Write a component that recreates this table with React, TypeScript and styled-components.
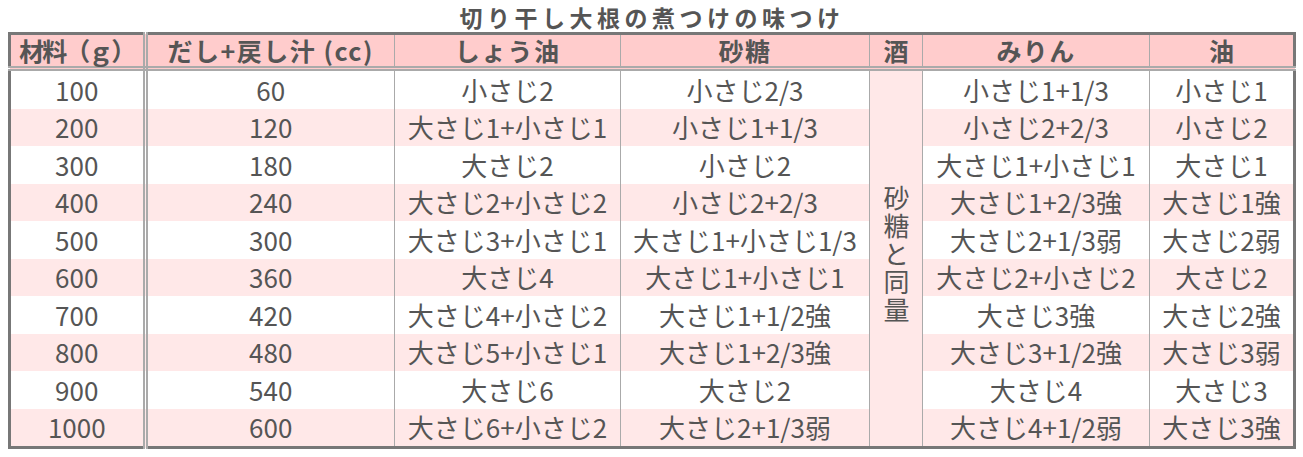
import React from 'react';
import styled, { createGlobalStyle } from 'styled-components';

const GlobalStyle = createGlobalStyle`
  html, body { margin: 0; padding: 0; background: #ffffff; }
  body { font-family: "Noto Sans CJK JP", "Noto Sans", sans-serif; color: #555555; }
`;

const Page = styled.div`
  padding: 0 8px;
`;

const Title = styled.h1`
  margin: 0;
  height: 32px;
  line-height: normal;
  text-align: center;
  font-size: 23px;
  font-weight: 700;
  letter-spacing: 4.5px;
  color: #555555;
  width: 1288px;
`;

const Table = styled.table`
  width: 1288px;
  table-layout: fixed;
  border-collapse: collapse;
  border: 3px solid #777777;
  font-size: 26px;
  color: #555555;
`;

const HeadCell = styled.th<{ $double?: boolean; $spacing: number }>`
  background: #ffcccc;
  font-size: 25px;
  font-weight: 700;
  height: 31px;
  padding: 0;
  line-height: 1;
  white-space: nowrap;
  text-align: center;
  vertical-align: middle;
  letter-spacing: ${(p) => p.$spacing}px;
  border: 1px solid #aaaaaa;
  border-bottom: 5px double #aaaaaa;
  ${(p) => (p.$double ? 'border-right: 5px double #aaaaaa;' : '')}
`;

const Cell = styled.td<{ $double?: boolean; $stripe?: boolean }>`
  background: ${(p) => (p.$stripe ? '#ffe8e8' : '#ffffff')};
  height: 37.5px;
  padding: 0;
  line-height: 1;
  white-space: nowrap;
  text-align: center;
  vertical-align: middle;
  border: 1px solid #aaaaaa;
  border-top: none;
  border-bottom: none;
  ${(p) => (p.$double ? 'border-right: 5px double #aaaaaa;' : '')}
`;

const SakeCell = styled.td`
  background: #ffe8e8;
  padding: 0;
  text-align: center;
  vertical-align: middle;
  border: 1px solid #aaaaaa;
`;

const VerticalText = styled.span`
  display: inline-block;
  writing-mode: vertical-rl;
  text-orientation: upright;
  letter-spacing: 2px;
  line-height: 1;
  font-size: 26px;
`;

const widths = [135.5, 249.5, 226, 249, 53, 227, 145];
const heads: { label: string; spacing: number }[] = [
  { label: '材料（ｇ）', spacing: -2 },
  { label: 'だし+戻し汁 (cc)', spacing: 1.5 },
  { label: 'しょう油', spacing: 1.4 },
  { label: '砂糖', spacing: 1.4 },
  { label: '酒', spacing: 0 },
  { label: 'みりん', spacing: 1.4 },
  { label: '油', spacing: 0 },
];

const rows: string[][] = [
  ['100', '60', '小さじ2', '小さじ2/3', '小さじ1+1/3', '小さじ1'],
  ['200', '120', '大さじ1+小さじ1', '小さじ1+1/3', '小さじ2+2/3', '小さじ2'],
  ['300', '180', '大さじ2', '小さじ2', '大さじ1+小さじ1', '大さじ1'],
  ['400', '240', '大さじ2+小さじ2', '小さじ2+2/3', '大さじ1+2/3強', '大さじ1強'],
  ['500', '300', '大さじ3+小さじ1', '大さじ1+小さじ1/3', '大さじ2+1/3弱', '大さじ2弱'],
  ['600', '360', '大さじ4', '大さじ1+小さじ1', '大さじ2+小さじ2', '大さじ2'],
  ['700', '420', '大さじ4+小さじ2', '大さじ1+1/2強', '大さじ3強', '大さじ2強'],
  ['800', '480', '大さじ5+小さじ1', '大さじ1+2/3強', '大さじ3+1/2強', '大さじ3弱'],
  ['900', '540', '大さじ6', '大さじ2', '大さじ4', '大さじ3'],
  ['1000', '600', '大さじ6+小さじ2', '大さじ2+1/3弱', '大さじ4+1/2弱', '大さじ3強'],
];

export default function App() {
  return (
    <Page>
      <GlobalStyle />
      <Title>切り干し大根の煮つけの味つけ</Title>
      <Table>
        <colgroup>
          {widths.map((w, i) => (
            <col key={i} style={{ width: `${w}px` }} />
          ))}
        </colgroup>
        <thead>
          <tr>
            {heads.map((h, i) => (
              <HeadCell key={h.label} $double={i === 0} $spacing={h.spacing}>
                {h.label}
              </HeadCell>
            ))}
          </tr>
        </thead>
        <tbody>
          {rows.map((r, ri) => {
            const stripe = ri % 2 === 1;
            return (
              <tr key={r[0]}>
                <Cell $double $stripe={stripe}>{r[0]}</Cell>
                <Cell $stripe={stripe}>{r[1]}</Cell>
                <Cell $stripe={stripe}>{r[2]}</Cell>
                <Cell $stripe={stripe}>{r[3]}</Cell>
                {ri === 0 && (
                  <SakeCell rowSpan={10}>
                    <VerticalText>砂糖と同量</VerticalText>
                  </SakeCell>
                )}
                <Cell $stripe={stripe}>{r[4]}</Cell>
                <Cell $stripe={stripe}>{r[5]}</Cell>
              </tr>
            );
          })}
        </tbody>
      </Table>
    </Page>
  );
}
